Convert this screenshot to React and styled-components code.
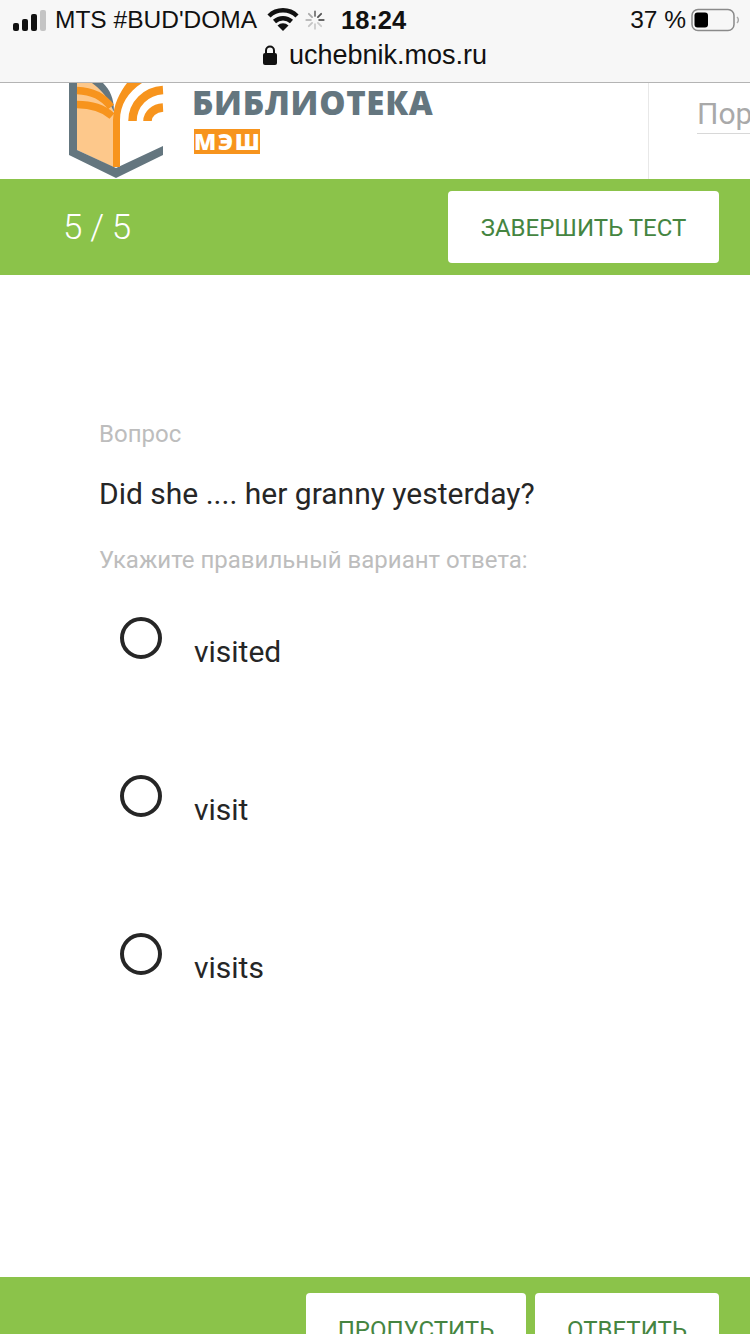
import React from "react";
import styled, { createGlobalStyle } from "styled-components";

const GlobalStyle = createGlobalStyle`
  html, body {
    margin: 0;
    padding: 0;
    background: #fff;
  }
  * {
    box-sizing: border-box;
  }
`;

const Page = styled.div`
  width: 750px;
  height: 1334px;
  overflow: hidden;
  display: flex;
  flex-direction: column;
  font-family: Roboto, sans-serif;
  color: #262626;
`;

const BrowserBar = styled.div`
  height: 83px;
  flex: none;
  background: #f7f7f7;
  border-bottom: 1px solid #b4b4b4;
  font-family: "Liberation Sans", sans-serif;
  color: #111;
`;

const StatusRow = styled.div`
  height: 38px;
  padding: 2px 11px 0 13px;
  display: flex;
  align-items: center;
  font-size: 24.5px;
  white-space: nowrap;
`;

const Carrier = styled.span`
  margin-left: 8px;
  width: 212px;
`;

const Spinner = styled.span`
  margin-left: 5px;
  display: flex;
`;

const Clock = styled.span`
  margin-left: 15px;
  font-size: 25.5px;
  font-weight: 700;
`;

const BatteryLabel = styled.span`
  margin: 0 5px 0 auto;
`;

const UrlRow = styled.div`
  height: 34px;
  display: flex;
  align-items: center;
  justify-content: center;
  gap: 12px;
  font-size: 27px;
`;

const SiteHeader = styled.header`
  height: 96px;
  flex: none;
  display: flex;
`;

const Brand = styled.div`
  width: 649px;
  flex: none;
  padding-left: 68px;
  display: flex;
  border-right: 1px solid #e8e8e8;
`;

const BrandText = styled.div`
  margin-left: 28px;
  display: flex;
  flex-direction: column;
  align-items: flex-start;
`;

const BrandName = styled.div`
  font-family: "Open Sans", sans-serif;
  font-weight: 800;
  font-size: 33px;
  line-height: 40px;
  letter-spacing: 0.7px;
  color: #64767f;
`;

const BrandBadge = styled.div`
  margin: 6px 0 0 2px;
  width: 66px;
  height: 25px;
  background: #f7941d;
  color: #fff;
  font-family: "Open Sans", sans-serif;
  font-weight: 800;
  font-size: 23px;
  line-height: 25px;
  letter-spacing: 1.5px;
  text-align: center;
`;

const SearchBox = styled.div`
  margin: 13px 0 0 48px;
  height: 38px;
  flex: 1;
  border-bottom: 1px solid #d8d8d8;
  font-size: 30px;
  line-height: 36px;
  color: #a9a9a9;
  white-space: nowrap;
`;

const ProgressBar = styled.div`
  height: 96px;
  flex: none;
  background: #8bc34a;
  padding: 12px 31px 12px 63px;
  display: flex;
  align-items: center;
  justify-content: space-between;
`;

const Counter = styled.div`
  color: #fff;
  font-size: 35px;
  font-weight: 300;
  letter-spacing: -0.4px;
`;

const ActionButton = styled.button`
  width: ${(props) => props.$width}px;
  height: 72px;
  flex: none;
  border: none;
  border-radius: 4px;
  background: #fff;
  color: #458541;
  font-family: Roboto, sans-serif;
  font-size: 24px;
  padding: 2px 0 0;
  white-space: nowrap;
`;

const Content = styled.main`
  flex: 1;
  padding: 145px 0 0 99px;
`;

const Hint = styled.div`
  font-size: 24px;
  line-height: 28px;
  color: #bdbdbd;
`;

const Question = styled.div`
  margin: 26px 0 32px;
  font-size: 30px;
  line-height: 40px;
`;

const Options = styled.div`
  margin-top: 43px;
  padding-left: 21px;
  display: flex;
  flex-direction: column;
  gap: 116px;
`;

const Option = styled.label`
  height: 42px;
  display: flex;
  gap: 32px;
`;

const Radio = styled.span`
  width: 42px;
  height: 42px;
  flex: none;
  border: 4.5px solid #262626;
  border-radius: 50%;
`;

const OptionText = styled.span`
  margin-top: 17px;
  font-size: 30px;
  line-height: 36px;
`;

const Footer = styled.footer`
  height: 57px;
  flex: none;
  background: #8bc34a;
  padding: 16px 31px 0 0;
  display: flex;
  justify-content: flex-end;
  gap: 9px;
  overflow: hidden;
`;

const SignalIcon = () => (
  <svg width="34" height="22" viewBox="0 0 34 22">
    <rect x="0" y="14" width="6" height="8" rx="2" fill="#111" />
    <rect x="9" y="10" width="6" height="12" rx="2" fill="#111" />
    <rect x="18" y="5" width="6" height="17" rx="2" fill="#111" />
    <rect x="27" y="1" width="6" height="21" rx="2" fill="#c4c4c4" />
  </svg>
);

const WifiIcon = () => (
  <svg width="32" height="24" viewBox="0 0 32 24">
    <path d="M2 8 A20 20 0 0 1 30 8" fill="none" stroke="#111" strokeWidth="4.5" />
    <path d="M7.5 13.5 A12.5 12.5 0 0 1 24.5 13.5" fill="none" stroke="#111" strokeWidth="4.5" />
    <path d="M16 23 L10.5 17.5 A8 8 0 0 1 21.5 17.5 Z" fill="#111" />
  </svg>
);

const SpinnerIcon = () => (
  <svg width="22" height="22" viewBox="0 0 24 24" strokeWidth="2" strokeLinecap="round">
    {[0, 45, 90, 135, 180, 225, 270, 315].map((angle, i) => (
      <line
        key={angle}
        x1="12"
        y1="2.5"
        x2="12"
        y2="7.5"
        stroke={["#777", "#555", "#666", "#ccc", "#ccc", "#c4c4c4", "#bbb", "#aaa"][i]}
        transform={`rotate(${angle} 12 12)`}
      />
    ))}
  </svg>
);

const LockIcon = () => (
  <svg width="14" height="20" viewBox="0 0 14 20">
    <path d="M3 9 V5.5 A4 4 0 0 1 11 5.5 V9" fill="none" stroke="#111" strokeWidth="2" />
    <rect x="0" y="8" width="14" height="12" rx="2" fill="#111" />
  </svg>
);

const BatteryIcon = () => (
  <svg width="48" height="24" viewBox="0 0 48 24">
    <rect x="1" y="1.5" width="42" height="21" rx="6" fill="none" stroke="#8a8a8a" strokeWidth="1.5" />
    <rect x="3.5" y="4.5" width="13.5" height="15" rx="3" fill="#000" />
    <path d="M46 9 A4 4 0 0 1 46 15" fill="none" stroke="#aaa" strokeWidth="1.5" />
  </svg>
);

const LogoIcon = () => (
  <svg width="96" height="96" viewBox="68 83 96 96">
    <path d="M77 83 H100 L113 110 V167 L77 150 Z" fill="#fdc88b" />
    <path d="M69 83 H77 V150 L116 168 L163 146 V155 L116 178 L69 155 Z" fill="#64767f" />
    <path d="M92 83 H103 C110 90 114 98 114 112 L110 104 C106 95 100 89 92 83 Z" fill="#64767f" />
    <path d="M77 90.5 C91 91 103 96 111 107" fill="none" stroke="#f7941d" strokeWidth="7.5" />
    <path d="M77 104.5 C91 104.5 103 108 112 116" fill="none" stroke="#f7941d" strokeWidth="7.5" />
    <path d="M113 167 V120 C113 105 120 92 127 83 H142 C128 92 120 105 120 120 V167 Z" fill="#f7941d" />
    <path d="M132.5 121 C132.5 104 146 91 163 90" fill="none" stroke="#f7941d" strokeWidth="8.5" />
    <path d="M147.5 121 C147.5 114 154 108 163 107.5" fill="none" stroke="#f7941d" strokeWidth="8.5" />
  </svg>
);

const App = () => {
  const options = ["visited", "visit", "visits"];

  return (
    <Page>
      <GlobalStyle />
      <BrowserBar>
        <StatusRow>
          <SignalIcon />
          <Carrier>MTS #BUD'DOMA</Carrier>
          <WifiIcon />
          <Spinner>
            <SpinnerIcon />
          </Spinner>
          <Clock>18:24</Clock>
          <BatteryLabel>37 %</BatteryLabel>
          <BatteryIcon />
        </StatusRow>
        <UrlRow>
          <LockIcon />
          uchebnik.mos.ru
        </UrlRow>
      </BrowserBar>
      <SiteHeader>
        <Brand>
          <LogoIcon />
          <BrandText>
            <BrandName>БИБЛИОТЕКА</BrandName>
            <BrandBadge>МЭШ</BrandBadge>
          </BrandText>
        </Brand>
        <SearchBox>Пор</SearchBox>
      </SiteHeader>
      <ProgressBar>
        <Counter>5 / 5</Counter>
        <ActionButton $width={271}>ЗАВЕРШИТЬ ТЕСТ</ActionButton>
      </ProgressBar>
      <Content>
        <Hint>Вопрос</Hint>
        <Question>Did she .... her granny yesterday?</Question>
        <Hint>Укажите правильный вариант ответа:</Hint>
        <Options>
          {options.map((option) => (
            <Option key={option}>
              <Radio />
              <OptionText>{option}</OptionText>
            </Option>
          ))}
        </Options>
      </Content>
      <Footer>
        <ActionButton $width={220}>ПРОПУСТИТЬ</ActionButton>
        <ActionButton $width={184}>ОТВЕТИТЬ</ActionButton>
      </Footer>
    </Page>
  );
};

export default App;
